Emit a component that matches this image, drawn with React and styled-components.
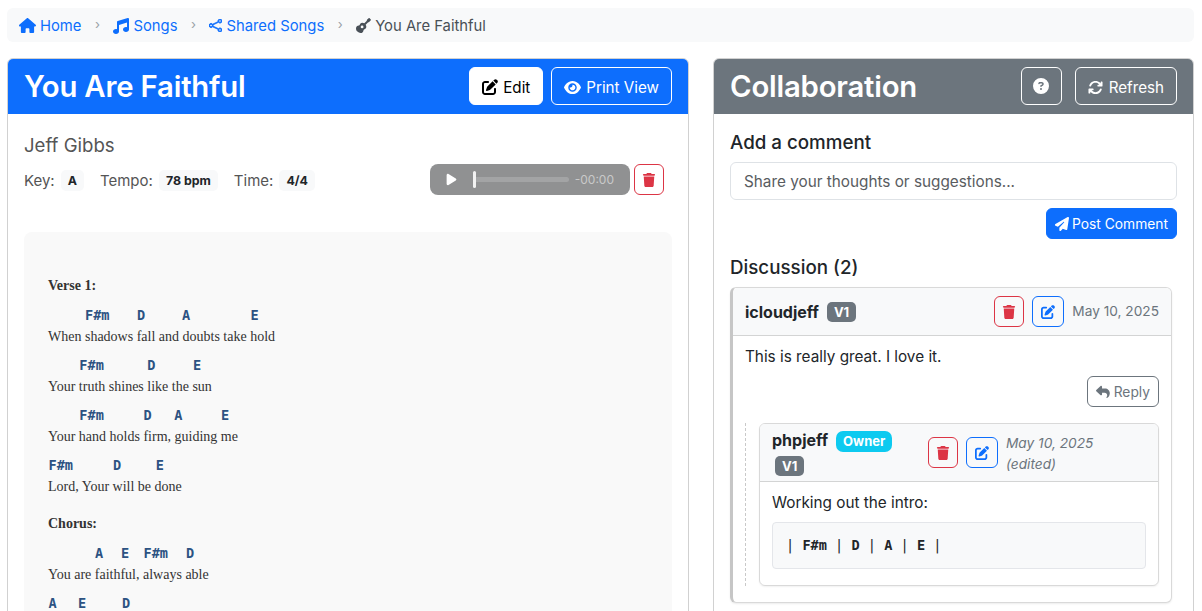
import React from "react";
import styled, { createGlobalStyle } from "styled-components";
import {
  FaHouse,
  FaMusic,
  FaGuitar,
  FaPenToSquare,
  FaEye,
  FaTrash,
  FaCircleQuestion,
  FaArrowsRotate,
  FaPaperPlane,
  FaReply,
  FaPlay,
} from "react-icons/fa6";
import { BsShare } from "react-icons/bs";

const CHAR_WIDTH = 8.19;

const song = [
  { title: "Verse 1:" },
  {
    chords: [["F#m", 85], ["D", 137], ["A", 182], ["E", 250.5]],
    lyric: "When shadows fall and doubts take hold",
  },
  {
    chords: [["F#m", 79.3], ["D", 147.3], ["E", 193]],
    lyric: "Your truth shines like the sun",
  },
  {
    chords: [["F#m", 79.3], ["D", 143.5], ["A", 174.3], ["E", 221]],
    lyric: "Your hand holds firm, guiding me",
  },
  {
    chords: [["F#m", 48.5], ["D", 113], ["E", 155.7]],
    lyric: "Lord, Your will be done",
  },
  { title: "Chorus:" },
  {
    chords: [["A", 95], ["E", 121], ["F#m", 143.5], ["D", 186]],
    lyric: "You are faithful, always able",
  },
  {
    chords: [["A", 48.5], ["E", 78], ["D", 122]],
  },
];

const GlobalStyle = createGlobalStyle`
  html, body {
    margin: 0;
    height: 611px;
    overflow: hidden;
    background: #fff;
  }
  body {
    font-family: Inter, "Liberation Sans", sans-serif;
    font-size: 16px;
    color: #212529;
  }
  * {
    box-sizing: border-box;
  }
`;

const Page = styled.div`
  padding: 8px 8px 0 7px;
`;

const Breadcrumb = styled.nav`
  display: flex;
  align-items: center;
  height: 34px;
  padding: 1px 12px 0;
  margin-bottom: 16px;
  background: #f8f9fa;
  border-radius: 6px;
  font-size: 14.8px;
`;

const Crumb = styled.a`
  display: flex;
  align-items: center;
  gap: 4px;
  color: ${(p) => (p.$active ? "#495057" : "#0d6efd")};
`;

const CrumbSep = styled.span`
  width: 32px;
  text-align: center;
  margin-top: -4px;
  color: #9aa0a6;
  font-size: 13px;
`;

const Columns = styled.div`
  display: grid;
  grid-template-columns: 682px 481px;
  gap: 24px;
`;

const Card = styled.section`
  border: 1px solid rgba(0, 0, 0, 0.18);
  border-radius: 6px;
  height: 640px;
  overflow: hidden;
`;

const CardHeader = styled.header`
  display: flex;
  align-items: center;
  justify-content: space-between;
  height: 55px;
  padding: 0 16px;
  color: #fff;
  background: ${(p) => p.$bg};
`;

const CardTitle = styled.h1`
  margin: 0;
  font-size: 29.3px;
  font-weight: 600;
  letter-spacing: -0.2px;
`;

const HeaderActions = styled.div`
  display: flex;
  gap: ${(p) => p.$gap || 8}px;
  flex-shrink: 0;
  margin-bottom: 1px;
`;

const Button = styled.button`
  display: inline-flex;
  align-items: center;
  justify-content: center;
  gap: 5px;
  height: 38px;
  padding: 2px 12px 0;
  border-radius: 6px;
  font: inherit;
  font-size: 15.2px;
  color: ${(p) => p.$color || "#fff"};
  background: ${(p) => p.$fill || "transparent"};
  border: 1px solid ${(p) => p.$border || "#fff"};

  svg {
    flex-shrink: 0;
  }
`;

const HelpButton = styled(Button)`
  width: 41px;
  padding: 0;
`;

const RefreshButton = styled(Button)`
  gap: 6px;
`;

const SmallButton = styled(Button)`
  width: ${(p) => p.$width || 30}px;
  height: 31px;
  padding: 0;
  font-size: 14px;
`;

const LeftBody = styled.div`
  padding: 16px;
`;

const Artist = styled.h2`
  margin: 3px 0 7px;
  font-size: 18.6px;
  line-height: 24px;
  font-weight: 400;
  color: #555;
`;

const MetaRow = styled.div`
  display: flex;
  align-items: flex-start;
  justify-content: space-between;
  padding-right: 8px;
`;

const MetaList = styled.div`
  display: flex;
  align-items: center;
  gap: 16px;
  height: 22px;
  margin-top: 5px;
  font-size: 15px;
  color: #555;
`;

const MetaItem = styled.div`
  display: flex;
  align-items: center;
  gap: 6px;
`;

const Chip = styled.span`
  padding: 3px 7px;
  border-radius: 5px;
  background: #f8f9fa;
  color: #212529;
  font-size: 12.4px;
  line-height: 15px;
  font-weight: 700;
`;

const AudioGroup = styled.div`
  display: flex;
  gap: 4px;
`;

const Player = styled.div`
  display: flex;
  align-items: center;
  width: 200px;
  height: 31px;
  padding: 0 16px 0 15px;
  border-radius: 8px;
  background: #909192;
  color: #fff;
  font-size: 12px;
`;

const Track = styled.div`
  position: relative;
  flex: 1;
  height: 5px;
  margin: 0 6px 0 15px;
  border-radius: 3px;
  background: #a3a4a5;

  &::before {
    content: "";
    position: absolute;
    left: 0;
    top: -6px;
    width: 3px;
    height: 17px;
    border-radius: 2px;
    background: #f2f2f2;
  }
`;

const PlayerTime = styled.span`
  color: #c9c9c9;
`;

const Sheet = styled.div`
  margin-top: 37px;
  padding: 45px 24px;
  background: #f9f9f9;
  border-radius: 8px;
  font-family: "Liberation Serif", "Times New Roman", serif;
  font-size: 14px;
  color: #333;
`;

const SectionTitle = styled.div`
  font-weight: 700;
  line-height: 18px;
  margin: ${(p) => (p.$first ? 0 : 18)}px 0 2px;
`;

const SongLine = styled.div`
  padding-top: 9px;
`;

const ChordRow = styled.div`
  display: flex;
  height: 18px;
  line-height: 18px;
  font-family: "DejaVu Sans Mono", "Liberation Mono", monospace;
  font-size: 13.6px;
  font-weight: 700;
  color: #2c5282;
`;

const Chord = styled.span`
  flex-shrink: 0;
  margin-left: ${(p) => p.$offset}px;
`;

const Lyric = styled.div`
  margin-top: 3px;
  line-height: 20px;
`;

const RightBody = styled.div`
  padding: 17px 16px 16px;
`;

const BlockTitle = styled.h3`
  margin: 0 0 7px;
  font-size: 18.75px;
  line-height: 24px;
  font-weight: 500;
`;

const CommentInput = styled.div`
  display: flex;
  align-items: center;
  height: 38px;
  padding: 0 13px;
  margin-bottom: 8px;
  border: 1px solid #dee2e6;
  border-radius: 6px;
  color: #595c5f;
  font-size: 15.3px;
`;

const PostRow = styled.div`
  display: flex;
  justify-content: flex-end;
  margin-bottom: 17px;
`;

const PostButton = styled(Button)`
  height: 31px;
  padding: 0 8px;
  gap: 3px;
  font-size: 13.8px;
  background: #0d6efd;
  border-color: #0d6efd;
`;

const Comment = styled.article`
  width: 442px;
  border: 1px solid rgba(0, 0, 0, 0.15);
  border-left: 3px solid #c6c6c6;
  border-radius: 6px;
  box-shadow: 0 1px 2px rgba(0, 0, 0, 0.08);
`;

const CommentHeader = styled.div`
  display: flex;
  align-items: center;
  justify-content: space-between;
  height: 48px;
  padding: 0 12px;
  background: #f8f9fa;
  border-bottom: 1px solid rgba(0, 0, 0, 0.15);
  border-radius: 5px 5px 0 0;
`;

const Author = styled.span`
  font-size: 16px;
  line-height: 18px;
  font-weight: 700;
`;

const Badge = styled.span`
  display: inline-block;
  padding: 3px 7px;
  margin-left: ${(p) => p.$ml ?? 8}px;
  margin-top: ${(p) => p.$mt ?? 0}px;
  border-radius: 5px;
  font-size: 13px;
  line-height: 14px;
  font-weight: 700;
  color: #fff;
  background: #6c757d;
`;

const OwnerBadge = styled(Badge)`
  line-height: 15px;
  border-radius: 7px;
  background: #0dcaf0;
`;

const AuthorLine = styled.div`
  display: flex;
  align-items: center;
`;

const ReplyAuthorLine = styled(AuthorLine)`
  align-items: flex-start;
`;

const HeaderTools = styled.div`
  display: flex;
  align-items: center;
  gap: 8px;
`;

const DateText = styled.span`
  font-size: 13.7px;
  line-height: 21px;
  color: #6c757d;
`;

const ReplyDate = styled(DateText)`
  width: 100px;
  padding-top: 1px;
  font-style: italic;
`;

const CommentBody = styled.div`
  padding: 9px 12px 16px;
`;

const CommentText = styled.p`
  margin: 0;
  font-size: 15.3px;
  line-height: 23px;
`;

const ReplyRow = styled.div`
  display: flex;
  justify-content: flex-end;
  margin: 8px 0 16px;
`;

const ReplyButton = styled(Button)`
  height: 31px;
  padding: 0 8px;
  font-size: 13.8px;
  gap: 4px;
`;

const ReplyThread = styled.div`
  padding: 0 0 0 13px;
  border-left: 1px dashed #c9c9c9;
`;

const ReplyCard = styled.article`
  border: 1px solid rgba(0, 0, 0, 0.15);
  border-radius: 6px;
  box-shadow: 0 1px 2px rgba(0, 0, 0, 0.06);
`;

const ReplyHeader = styled.div`
  display: flex;
  justify-content: space-between;
  height: 58px;
  padding: 7px 12px 0;
  background: #f8f9fa;
  border-bottom: 1px solid rgba(0, 0, 0, 0.15);
  border-radius: 5px 5px 0 0;
`;

const ReplyAuthor = styled.div`
  width: 156px;
`;

const ReplyTools = styled(HeaderTools)`
  align-items: flex-start;
  width: 218px;
  margin-top: 1px;
`;

const ToolButtons = styled.div`
  display: flex;
  gap: 8px;
  padding-top: 5px;
`;

const ReplyBody = styled.div`
  padding: 9px 12px 16px;
`;

const CodeBlock = styled.pre`
  margin: 8px 0 0;
  height: 47px;
  padding: 0 13px 2px;
  display: flex;
  align-items: center;
  background: #f8f9fa;
  border: 1px solid #e4e6ea;
  border-radius: 4px;
  font-family: "DejaVu Sans Mono", "Liberation Mono", monospace;
  font-size: 13.6px;
  font-weight: 400;
  color: #212529;

  b {
    font-weight: 700;
  }
`;

function ChordLine({ chords }) {
  let cursor = 48;
  return (
    <ChordRow>
      {chords.map(([name, x]) => {
        const offset = x - cursor;
        cursor = x + name.length * CHAR_WIDTH;
        return (
          <Chord key={name + x} $offset={offset.toFixed(1)}>
            {name}
          </Chord>
        );
      })}
    </ChordRow>
  );
}

function App() {
  return (
    <Page>
      <GlobalStyle />
      <Breadcrumb>
        <Crumb><FaHouse size={17} /> Home</Crumb>
        <CrumbSep>›</CrumbSep>
        <Crumb><FaMusic size={16} /> Songs</Crumb>
        <CrumbSep>›</CrumbSep>
        <Crumb><BsShare size={13} stroke="currentColor" strokeWidth={1} /> Shared Songs</Crumb>
        <CrumbSep>›</CrumbSep>
        <Crumb $active><FaGuitar size={15} /> You Are Faithful</Crumb>
      </Breadcrumb>

      <Columns>
        <Card>
          <CardHeader $bg="#0d6efd">
            <CardTitle>You Are Faithful</CardTitle>
            <HeaderActions>
              <Button $fill="#fff" $color="#000"><FaPenToSquare size={16} /> Edit</Button>
              <Button><FaEye size={17} /> Print View</Button>
            </HeaderActions>
          </CardHeader>
          <LeftBody>
            <Artist>Jeff Gibbs</Artist>
            <MetaRow>
              <MetaList>
                <MetaItem>Key: <Chip>A</Chip></MetaItem>
                <MetaItem>Tempo: <Chip>78 bpm</Chip></MetaItem>
                <MetaItem>Time: <Chip>4/4</Chip></MetaItem>
              </MetaList>
              <AudioGroup>
                <Player>
                  <FaPlay size={13} />
                  <Track />
                  <PlayerTime>-00:00</PlayerTime>
                </Player>
                <SmallButton $color="#dc3545" $border="#dc3545"><FaTrash /></SmallButton>
              </AudioGroup>
            </MetaRow>
            <Sheet>
              {song.map((line, i) =>
                line.title ? (
                  <SectionTitle key={line.title} $first={i === 0}>{line.title}</SectionTitle>
                ) : (
                  <SongLine key={i}>
                    <ChordLine chords={line.chords} />
                    {line.lyric && <Lyric>{line.lyric}</Lyric>}
                  </SongLine>
                )
              )}
            </Sheet>
          </LeftBody>
        </Card>

        <Card>
          <CardHeader $bg="#6c757d">
            <CardTitle>Collaboration</CardTitle>
            <HeaderActions $gap={13}>
              <HelpButton><FaCircleQuestion size={16} /></HelpButton>
              <RefreshButton><FaArrowsRotate size={15} /> Refresh</RefreshButton>
            </HeaderActions>
          </CardHeader>
          <RightBody>
            <BlockTitle>Add a comment</BlockTitle>
            <CommentInput>Share your thoughts or suggestions...</CommentInput>
            <PostRow>
              <PostButton><FaPaperPlane size={14} /> Post Comment</PostButton>
            </PostRow>
            <BlockTitle>Discussion (2)</BlockTitle>
            <Comment>
              <CommentHeader>
                <AuthorLine>
                  <Author>icloudjeff</Author>
                  <Badge>V1</Badge>
                </AuthorLine>
                <HeaderTools>
                  <SmallButton $color="#dc3545" $border="#dc3545"><FaTrash /></SmallButton>
                  <SmallButton $width={32} $color="#0d6efd" $border="#0d6efd"><FaPenToSquare /></SmallButton>
                  <DateText>May 10, 2025</DateText>
                </HeaderTools>
              </CommentHeader>
              <CommentBody>
                <CommentText>This is really great. I love it.</CommentText>
                <ReplyRow>
                  <ReplyButton $color="#6c757d" $border="#6c757d"><FaReply /> Reply</ReplyButton>
                </ReplyRow>
                <ReplyThread>
                  <ReplyCard>
                    <ReplyHeader>
                      <ReplyAuthor>
                        <ReplyAuthorLine>
                          <Author>phpjeff</Author>
                          <OwnerBadge>Owner</OwnerBadge>
                        </ReplyAuthorLine>
                        <Badge $ml={3} $mt={4}>V1</Badge>
                      </ReplyAuthor>
                      <ReplyTools>
                        <ToolButtons>
                          <SmallButton $color="#dc3545" $border="#dc3545"><FaTrash /></SmallButton>
                          <SmallButton $width={32} $color="#0d6efd" $border="#0d6efd"><FaPenToSquare /></SmallButton>
                        </ToolButtons>
                        <ReplyDate>May 10, 2025 (edited)</ReplyDate>
                      </ReplyTools>
                    </ReplyHeader>
                    <ReplyBody>
                      <CommentText>Working out the intro:</CommentText>
                      <CodeBlock>| <b>F#m</b> | <b>D</b> | <b>A</b> | <b>E</b> |</CodeBlock>
                    </ReplyBody>
                  </ReplyCard>
                </ReplyThread>
              </CommentBody>
            </Comment>
          </RightBody>
        </Card>
      </Columns>
    </Page>
  );
}

export default App;
